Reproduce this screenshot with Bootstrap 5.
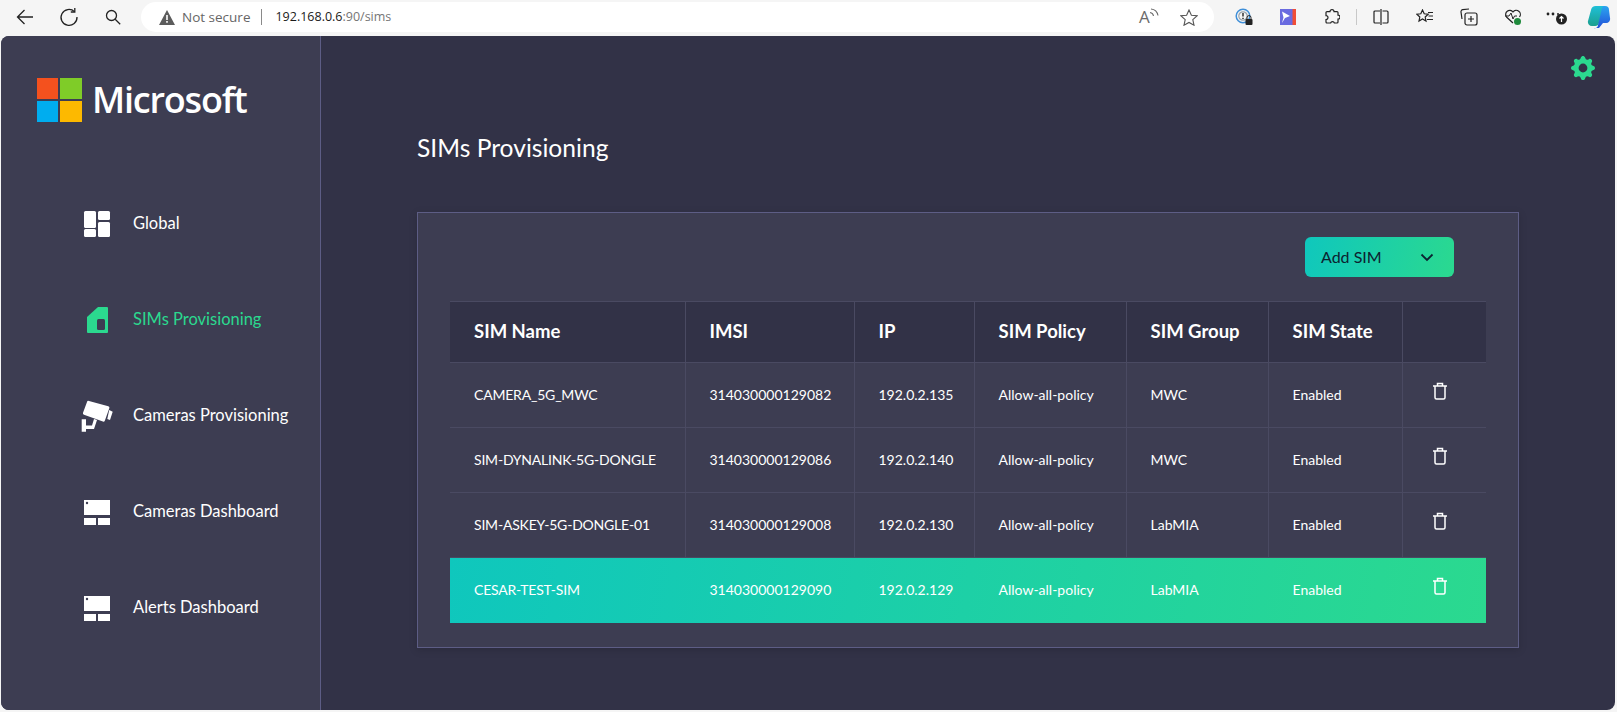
<!DOCTYPE html>
<html lang="en">
<head>
    <meta charset="UTF-8">
    <meta name="viewport" content="width=device-width, initial-scale=1.0">
    <title>SIMs Provisioning</title>
    <link href="https://cdn.jsdelivr.net/npm/bootstrap@5.3.0/dist/css/bootstrap.min.css" rel="stylesheet">
    <style>
        html, body { height: 100%; }
        body { background: #f5f5f5; font-family: "Lato", sans-serif; overflow: hidden; }
        .tool-bar { height: 36px; padding: 2px 0 4px 3px; }
        .tool-slot { width: 44px; height: 30px; flex: none; }
        .tool-slot.last-slot { width: 40px; }
        .addr-pill { margin-left: 6px; margin-right: 8px; width: 1073px; height: 30px; background: #fff; border-radius: 15px; padding: 0 16px 0 18px; font-family: "Open Sans", sans-serif; font-size: 13.5px; flex: none; }
        .addr-warn { color: #666; margin-left: 7px; }
        .addr-sep { width: 1px; height: 16px; background: #8a8a8a; margin: 0 13px 0 11px; }
        .addr-host { color: #1a1a1a; font-size: 12.5px; }
        .addr-rest { color: #767676; font-size: 12.5px; }
        .addr-tools { gap: 21px; }
        .read-ico { width: 20px; height: 20px; line-height: 20px; color: #6b6b6b; font-size: 17px; position: relative; }
        .read-ico svg { position: absolute; left: 9px; top: 1px; }
        .tool-divider { width: 1px; height: 16px; background: #c8c8c8; margin: 0 2px; flex: none; }
        .app-frame { height: 674px; margin: 0 2px 2px 1px; border-radius: 8px; overflow: hidden; background: #323247; color: #fff; }
        .side-panel { width: 319px; flex: none; background: #3d3d52; border-right: 1px solid #5d5d85; box-sizing: content-box; padding-top: 42px; }
        .brand-row { padding-left: 36px; height: 44px; margin-bottom: 54px; }
        .brand-name { font-family: "Open Sans", sans-serif; font-weight: 600; font-size: 36px; letter-spacing: -1.2px; line-height: 44px; margin-left: 9px; color: #fff; }
        .side-link { height: 96px; color: #fff; font-size: 16.5px; text-decoration: none; padding-left: 80px; }
        .side-link:hover { color: #fff; }
        .side-link.is-active, .side-link.is-active:hover { color: #2bd98f; }
        .side-label { padding-bottom: 2px; }
        .side-ico { width: 36px; height: 36px; margin-right: 16px; flex: none; }
        .main-panel { padding: 20px 20px 0 96px; min-width: 0; }
        .gear-row { height: 24px; }
        .page-head { font-size: 24.6px; font-weight: 400; line-height: 30px; margin: 53px 0 49px; color: #fff; }
        .sim-panel { margin-right: 76px; background: #3d3d52; border: 1px solid #5d5d85; padding: 24px 32px 24px; box-shadow: 0 2px 8px rgba(0,0,0,.15); }
        .add-btn { width: 149px; height: 40px; border: 0; border-radius: 6px; background: linear-gradient(105deg, #0fc7bd, #2bd98f); color: #0c2230; font-size: 16px; padding: 0 20px 0 16px; }
        .add-btn:hover { color: #0c2230; background: linear-gradient(105deg, #0fc7bd, #2bd98f); }
        .sim-table { table-layout: fixed; width: 1036px; margin: 24px 0 0; color: #fff; --bs-table-bg: transparent; --bs-table-color: #fff; border-collapse: collapse; }
        .sim-table th, .sim-table td { padding: 0 0 0 24px; border: 1px solid #4a4a62; border-width: 1px 1px 1px 0; vertical-align: middle; }
        .sim-table tr > :last-child { border-right: 0; }
        .sim-table thead tr { height: 61px; }
        .sim-table thead th { background: #323247; font-size: 18.5px; font-weight: 700; }
        .sim-table tbody tr { height: 65px; }
        .sim-table tbody td { font-size: 14px; padding-bottom: 2px; }
        .sim-table tbody td:first-child { letter-spacing: -.2px; }
        .sim-table .col-name { width: 235px; }
        .sim-table .col-imsi { width: 169px; }
        .sim-table .col-ip { width: 120px; }
        .sim-table .col-policy { width: 152px; }
        .sim-table .col-group { width: 142px; }
        .sim-table .col-state { width: 134px; }
        .sim-table .col-del { width: 84px; }
        .sim-table tr.row-picked { background: linear-gradient(100deg, #0fc7bd, #2bd98f); }
        .sim-table tr.row-picked td { border-color: transparent; border-top-color: #4a4a62; }
        .trash-ico { display: block; width: 16px; height: 18px; margin: -6px 0 0 5px; }
    </style>
</head>
<body>
    <!-- barre du navigateur -->
    <div class="tool-bar d-flex align-items-center">
        <div class="tool-slot d-flex align-items-center justify-content-center">
            <svg width="18" height="18" viewBox="0 0 18 18" fill="none" stroke="#222" stroke-width="1.3"><path d="M17 9H1.5M8.5 2 1.5 9l7 7"/></svg>
        </div>
        <div class="tool-slot d-flex align-items-center justify-content-center">
            <svg width="20" height="20" viewBox="0 0 20 20" fill="none" stroke="#222" stroke-width="1.3"><path d="M15.5 4.6A8 8 0 1 0 18 10"/><path d="M15.8 1v4h-4"/></svg>
        </div>
        <div class="tool-slot d-flex align-items-center justify-content-center">
            <svg width="16" height="16" viewBox="0 0 16 16" fill="none" stroke="#222" stroke-width="1.3"><circle cx="6.5" cy="6.5" r="5"/><path d="m10.2 10.2 5 5"/></svg>
        </div>
        <div class="addr-pill d-flex align-items-center">
            <svg width="16" height="15" viewBox="0 0 16 15"><path d="M8 0 16 15H0z" fill="#5c5c5c"/><path d="M7.2 5h1.6v5H7.2zM7.2 11h1.6v1.7H7.2z" fill="#fff"/></svg>
            <span class="addr-warn">Not secure</span>
            <span class="addr-sep"></span>
            <span class="addr-host">192.168.0.6</span><span class="addr-rest">:90/sims</span>
            <span class="addr-tools ms-auto d-flex align-items-center">
                <span class="read-ico">A<svg width="12" height="12" viewBox="0 0 12 12" fill="none" stroke="#6b6b6b" stroke-width="1.1"><path d="M2 4.500a4 4 0 0 1 3.500 3.500M3 1a8 8 0 0 1 7 6.500"/></svg></span>
                <svg width="18" height="17" viewBox="0 0 18 17" fill="none" stroke="#555" stroke-width="1.1"><path d="m9 1 2.4 5.2 5.600.6-4.200 3.800 1.200 5.600L9 13.400l-5 2.800 1.200-5.600L1 6.800l5.600-.6z"/></svg>
            </span>
        </div>
        <div class="tool-slot d-flex align-items-center justify-content-center">
            <svg width="18" height="18" viewBox="0 0 18 18" fill="none"><circle cx="8" cy="8" r="6.800" stroke="#3f8fd8" stroke-width="1.500"/><circle cx="8" cy="8" r="4.200" stroke="#9aa4ad" stroke-width="1.200"/><path d="M8 5v3.600M8 9.800v1.200" stroke="#222" stroke-width="1.400"/><rect x="10.500" y="11" width="7" height="6" rx="1" fill="#222"/><path d="M12 11V9.600a2 2 0 0 1 4 0V11" stroke="#222"/></svg>
        </div>
        <div class="tool-slot d-flex align-items-center justify-content-center">
            <svg width="16" height="16" viewBox="0 0 16 16"><rect width="16" height="16" fill="#6a6be0"/><rect x="12.500" width="3.500" height="16" fill="#f04e37"/><path d="M2 2.500 10 7 5 9l-3 5 1.500-5.500z" fill="#fff"/></svg>
        </div>
        <div class="tool-slot d-flex align-items-center justify-content-center">
            <svg width="16" height="16" viewBox="0 0 16 16" fill="none" stroke="#222" stroke-width="1.200"><path d="M6 2.600a2 2 0 0 1 4 0h3a1 1 0 0 1 1 1v2.600a2 2 0 0 1 0 4V13a1 1 0 0 1-1 1h-2.600a2 2 0 0 0-3.800 0H3a1 1 0 0 1-1-1v-2.400a2 2 0 0 0 0-4V3.600a1 1 0 0 1 1-1z"/></svg>
        </div>
        <span class="tool-divider"></span>
        <div class="tool-slot d-flex align-items-center justify-content-center">
            <svg width="16" height="16" viewBox="0 0 16 16" fill="none" stroke="#222" stroke-width="1.200"><path d="M7 2H2a1 1 0 0 0-1 1v10a1 1 0 0 0 1 1h5M9.500 2H14a1 1 0 0 1 1 1v10a1 1 0 0 1-1 1H9.500M8 0v16"/></svg>
        </div>
        <div class="tool-slot d-flex align-items-center justify-content-center">
            <svg width="18" height="16" viewBox="0 0 18 16" fill="none" stroke="#222" stroke-width="1.200"><path d="m6.500 1 1.700 3.800 4 .4-3 2.800.8 4-3.500-2-3.500 2 .8-4-3-2.800 4-.4zM12 3.500h5M12.500 7H17M11 10.500h6"/></svg>
        </div>
        <div class="tool-slot d-flex align-items-center justify-content-center">
            <svg width="18" height="18" viewBox="0 0 18 18" fill="none" stroke="#222" stroke-width="1.200"><path d="M2 11 1 4a2 2 0 0 1 1.700-2.300L9 1"/><rect x="5" y="5" width="12" height="12" rx="2"/><path d="M11 8v6M8 11h6"/></svg>
        </div>
        <div class="tool-slot d-flex align-items-center justify-content-center">
            <svg width="18" height="18" viewBox="0 0 18 18" fill="none"><path d="M9 15 2.500 9A3.800 3.800 0 0 1 9 4a3.800 3.800 0 0 1 6.500 5" stroke="#222" stroke-width="1.200"/><path d="M1 8h4l2-3 2 6 1.500-3H13" stroke="#222"/><circle cx="13.500" cy="13.500" r="3.500" fill="#1f8a3c"/></svg>
        </div>
        <div class="tool-slot d-flex align-items-center justify-content-center">
            <svg width="22" height="18" viewBox="0 0 22 18"><circle cx="2" cy="6" r="1.400" fill="#222"/><circle cx="7" cy="6" r="1.400" fill="#222"/><circle cx="12" cy="6" r="1" fill="#222"/><circle cx="15.500" cy="11" r="5.500" fill="#222"/><path d="M15.500 14V8.500M13.500 10.500l2-2 2 2" stroke="#fff" stroke-width="1.200" fill="none"/></svg>
        </div>
        <div class="tool-slot last-slot d-flex align-items-center justify-content-center">
            <svg width="24" height="24" viewBox="0 0 24 24"><defs><linearGradient id="copA" x1="0" y1="0" x2="0" y2="1"><stop offset="0" stop-color="#1fc0d8"/><stop offset="1" stop-color="#1c9f8f"/></linearGradient><linearGradient id="copB" x1="0" y1="0" x2="0" y2="1"><stop offset="0" stop-color="#2aa5f0"/><stop offset="1" stop-color="#2450d8"/></linearGradient></defs><path d="M9 1h8l-5 17a4 4 0 0 1-4 3H5a4 4 0 0 1-4-5l3-11a5 5 0 0 1 5-4z" fill="url(#copA)"/><path d="M16 1h2a4 4 0 0 1 4 4l1 8a4 4 0 0 1-4 5h-3l-4 5H7a3 3 0 0 0 4-3l4-17z" fill="url(#copB)"/></svg>
        </div>
    </div>

    <div class="app-frame d-flex">
        <!-- menu de gauche -->
        <div class="side-panel">
            <div class="brand-row d-flex align-items-center">
                <svg width="46" height="44" viewBox="0 0 46 44"><rect width="21" height="21" fill="#f4511e"/><rect x="23" width="22" height="21" fill="#7fcc28"/><rect y="23" width="21" height="21" fill="#00adef"/><rect x="23" y="23" width="22" height="21" fill="#fdb900"/></svg>
                <span class="brand-name">Microsoft</span>
            </div>
            <nav class="d-flex flex-column">
                <a class="side-link d-flex align-items-center" href="#">
                    <svg class="side-ico" viewBox="0 0 36 36" fill="#fff"><rect x="3" y="5" width="12" height="17" rx="1.500"/><rect x="17" y="5" width="12" height="9" rx="1.500"/><rect x="3" y="23" width="12" height="8" rx="1.500"/><rect x="17" y="16" width="12" height="15" rx="1.500"/></svg>
                    <span class="side-label">Global</span>
                </a>
                <a class="side-link is-active d-flex align-items-center" href="#">
                    <svg class="side-ico" viewBox="0 0 36 36"><path d="M17 5H26a1 1 0 0 1 1 1v24a1 1 0 0 1-1 1H7a1 1 0 0 1-1-1V15z" fill="#2bd98f"/><rect x="16" y="17" width="8" height="11" rx="1.500" fill="#3d3d52"/></svg>
                    <span class="side-label">SIMs Provisioning</span>
                </a>
                <a class="side-link d-flex align-items-center" href="#">
                    <svg class="side-ico" viewBox="0 0 36 36" fill="#fff"><path d="M8 2.900 27.300 8.300a1.500 1.500 0 0 1 1 2l-4.500 12.400a1.500 1.500 0 0 1-1.900.9L3 16.700a1.500 1.500 0 0 1-1-1.900L6 3.900a1.500 1.500 0 0 1 2-1z"/><path d="m28.200 12 3.500 1.700L29 22l-2.700-1zM.7 21.300H5v6.200h6l2-6.500 3 1-3 9H5v2.700H.7z"/></svg>
                    <span class="side-label">Cameras Provisioning</span>
                </a>
                <a class="side-link d-flex align-items-center" href="#">
                    <svg class="side-ico" viewBox="0 0 36 36"><rect x="3" y="6" width="26" height="15" fill="#fff"/><circle cx="6" cy="9" r="1.200" fill="#3d3d52"/><rect x="3" y="24" width="12" height="7" fill="#fff"/><rect x="17" y="24" width="12" height="7" fill="#fff"/></svg>
                    <span class="side-label">Cameras Dashboard</span>
                </a>
                <a class="side-link d-flex align-items-center" href="#">
                    <svg class="side-ico" viewBox="0 0 36 36"><rect x="3" y="6" width="26" height="15" fill="#fff"/><circle cx="6" cy="9" r="1.200" fill="#3d3d52"/><rect x="3" y="24" width="12" height="7" fill="#fff"/><rect x="17" y="24" width="12" height="7" fill="#fff"/></svg>
                    <span class="side-label">Alerts Dashboard</span>
                </a>
            </nav>
        </div>

        <!-- contenu -->
        <div class="main-panel flex-grow-1">
            <div class="gear-row d-flex justify-content-end">
                <svg width="24" height="24" viewBox="0 0 16 16" fill="#2bd98f"><path d="M9.405 1.050c-.413-1.400-2.397-1.400-2.810 0l-.1.340a1.464 1.464 0 0 1-2.105.872l-.31-.17c-1.283-.698-2.686.705-1.987 1.987l.169.311c.446.820.023 1.841-.872 2.105l-.34.1c-1.400.413-1.400 2.397 0 2.810l.34.1a1.464 1.464 0 0 1 .872 2.105l-.17.31c-.698 1.283.705 2.686 1.987 1.987l.311-.169a1.464 1.464 0 0 1 2.105.872l.1.340c.413 1.400 2.397 1.400 2.810 0l.1-.34a1.464 1.464 0 0 1 2.105-.872l.31.17c1.283.698 2.686-.705 1.987-1.987l-.169-.311a1.464 1.464 0 0 1 .872-2.105l.34-.1c1.400-.413 1.400-2.397 0-2.810l-.34-.1a1.464 1.464 0 0 1-.872-2.105l.17-.31c.698-1.283-.705-2.686-1.987-1.987l-.311.169a1.464 1.464 0 0 1-2.105-.872l-.1-.34zM8 10.930a2.929 2.929 0 1 1 0-5.860 2.929 2.929 0 0 1 0 5.858z"/></svg>
            </div>
            <h1 class="page-head">SIMs Provisioning</h1>

            <div class="sim-panel">
                <div class="d-flex justify-content-end pe-2">
                    <button class="btn add-btn d-flex align-items-center justify-content-between me-4" type="button">
                        Add SIM
                        <svg width="14" height="9" viewBox="0 0 14 9" fill="none" stroke="#0c2230" stroke-width="1.800"><path d="m1.500 1.500 5.500 5.500 5.500-5.500"/></svg>
                    </button>
                </div>
                <table class="table sim-table">
                    <thead>
                        <tr>
                            <th class="col-name">SIM Name</th>
                            <th class="col-imsi">IMSI</th>
                            <th class="col-ip">IP</th>
                            <th class="col-policy">SIM Policy</th>
                            <th class="col-group">SIM Group</th>
                            <th class="col-state">SIM State</th>
                            <th class="col-del"></th>
                        </tr>
                    </thead>
                    <tbody id="sims-table"></tbody>
                </table>
            </div>
        </div>
    </div>

    <script>
        const sims = [
            ['CAMERA_5G_MWC', '314030000129082', '192.0.2.135', 'MWC'],
            ['SIM-DYNALINK-5G-DONGLE', '314030000129086', '192.0.2.140', 'MWC'],
            ['SIM-ASKEY-5G-DONGLE-01', '314030000129008', '192.0.2.130', 'LabMIA'],
            ['CESAR-TEST-SIM', '314030000129090', '192.0.2.129', 'LabMIA']
        ];
        const trash = `<svg class="trash-ico" viewBox="0 0 16 18" fill="none" stroke="#fff" stroke-width="1.500"><path d="M1 4h14M5.500 4V1.500h5V4M3 4v11.500a1.500 1.500 0 0 0 1.500 1.500h7a1.500 1.500 0 0 0 1.500-1.500V4"/></svg>`;
        const tbody = document.getElementById('sims-table');
        sims.forEach((s, i) => {
            const tr = document.createElement('tr');
            if (i === sims.length - 1) tr.className = 'row-picked';
            tr.innerHTML = `
                <td>${s[0]}</td>
                <td>${s[1]}</td>
                <td>${s[2]}</td>
                <td>Allow-all-policy</td>
                <td>${s[3]}</td>
                <td>Enabled</td>
                <td>${trash}</td>
            `;
            tbody.appendChild(tr);
        });
    </script>
    <script src="https://cdn.jsdelivr.net/npm/bootstrap@5.3.0/dist/js/bootstrap.bundle.min.js"></script>
</body>
</html>
